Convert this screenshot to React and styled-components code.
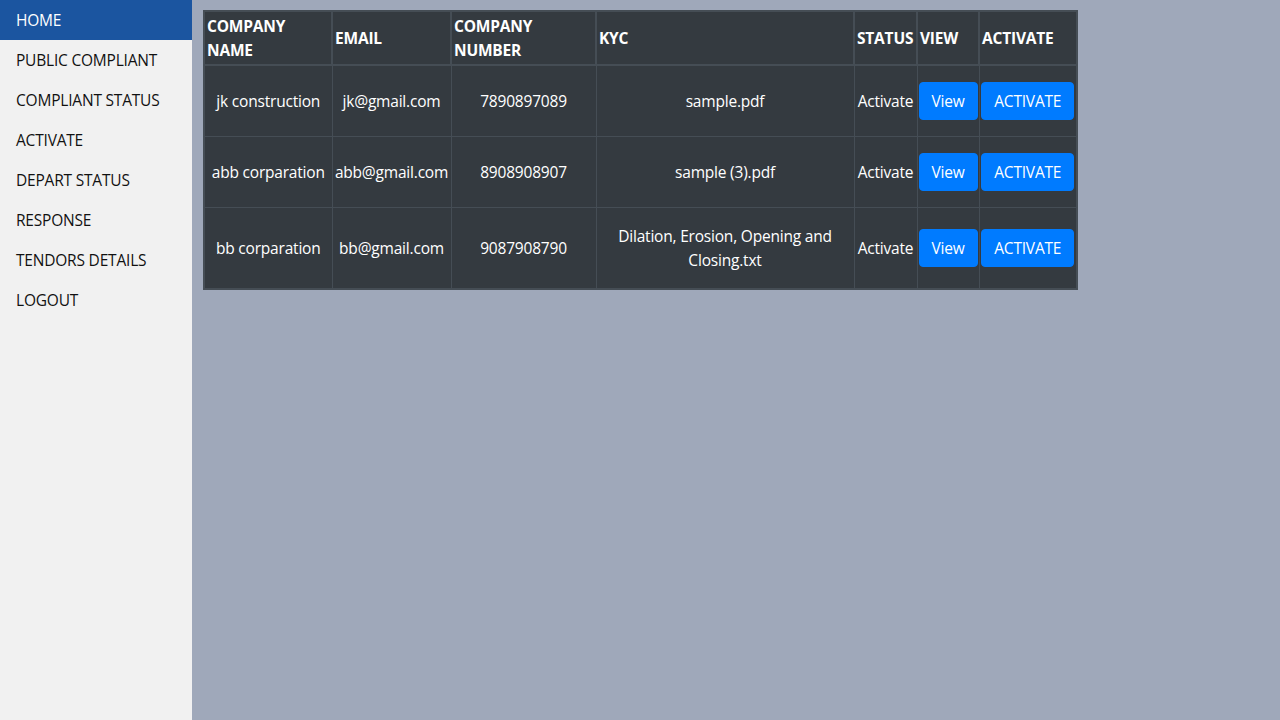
import React from "react";
import styled, { createGlobalStyle } from "styled-components";

const GlobalStyle = createGlobalStyle`
  html, body {
    margin: 0;
    padding: 0;
    height: 100%;
  }
  body {
    font-family: "Open Sans", "Noto Sans", sans-serif;
    background-color: #9fa8ba;
  }
  #root {
    height: 100%;
  }
`;

const Layout = styled.div`
  display: flex;
  min-height: 720px;
`;

const Sidebar = styled.nav`
  width: 192px;
  flex-shrink: 0;
  background-color: #f1f1f1;
  display: flex;
  flex-direction: column;
`;

const NavItem = styled.a`
  display: block;
  height: 40px;
  line-height: 40px;
  padding-left: 16px;
  font-size: 15.5px;
  color: ${(props) => (props.active ? "#ffffff" : "#111111")};
  background-color: ${(props) => (props.active ? "#1b55a0" : "transparent")};
  text-decoration: none;
  letter-spacing: -0.2px;
  cursor: pointer;
`;

const Main = styled.main`
  flex: 1;
  padding: 10px 0 0 11px;
`;

const Table = styled.table`
  border-collapse: collapse;
  table-layout: fixed;
  width: 873px;
  background-color: #343a40;
  color: #ffffff;
  border: 2px solid #454d55;
  font-size: 15.5px;
  letter-spacing: -0.2px;
`;

const Th = styled.th`
  border: 2px solid #454d55;
  text-align: left;
  font-weight: 700;
  padding: 2px;
  line-height: 24px;
  vertical-align: middle;
`;

const Td = styled.td`
  border: 1px solid #454d55;
  text-align: center;
  padding: 16px 1px;
  line-height: 24px;
  vertical-align: middle;
  white-space: ${(props) => (props.nowrap ? "nowrap" : "normal")};
`;

const Button = styled.button`
  font-family: inherit;
  font-size: 15.5px;
  letter-spacing: -0.2px;
  color: #ffffff;
  background-color: #007bff;
  border: 1px solid #007bff;
  border-radius: 4px;
  padding: 6px 12px;
  line-height: 24px;
  cursor: pointer;
`;

const navItems = [
  "HOME",
  "PUBLIC COMPLIANT",
  "COMPLIANT STATUS",
  "ACTIVATE",
  "DEPART STATUS",
  "RESPONSE",
  "TENDORS DETAILS",
  "LOGOUT",
];

const columns = [
  { label: "COMPANY NAME", width: 128 },
  { label: "EMAIL", width: 119 },
  { label: "COMPANY NUMBER", width: 145 },
  { label: "KYC", width: 258 },
  { label: "STATUS", width: 63 },
  { label: "VIEW", width: 62 },
  { label: "ACTIVATE", width: 98 },
];

const companies = [
  { name: "jk construction", email: "jk@gmail.com", number: "7890897089", kyc: "sample.pdf", status: "Activate" },
  { name: "abb corparation", email: "abb@gmail.com", number: "8908908907", kyc: "sample (3).pdf", status: "Activate" },
  { name: "bb corparation", email: "bb@gmail.com", number: "9087908790", kyc: "Dilation, Erosion, Opening and Closing.txt", status: "Activate" },
];

export default function App() {
  return (
    <>
      <GlobalStyle />
      <Layout>
        <Sidebar>
          {navItems.map((item, i) => (
            <NavItem key={item} active={i === 0}>
              {item}
            </NavItem>
          ))}
        </Sidebar>
        <Main>
          <Table>
            <colgroup>
              {columns.map((c) => (
                <col key={c.label} style={{ width: c.width }} />
              ))}
            </colgroup>
            <thead>
              <tr>
                {columns.map((c) => (
                  <Th key={c.label}>{c.label}</Th>
                ))}
              </tr>
            </thead>
            <tbody>
              {companies.map((c) => (
                <tr key={c.email}>
                  <Td nowrap>{c.name}</Td>
                  <Td nowrap>{c.email}</Td>
                  <Td>{c.number}</Td>
                  <Td>{c.kyc}</Td>
                  <Td nowrap>{c.status}</Td>
                  <Td>
                    <Button>View</Button>
                  </Td>
                  <Td>
                    <Button>ACTIVATE</Button>
                  </Td>
                </tr>
              ))}
            </tbody>
          </Table>
        </Main>
      </Layout>
    </>
  );
}
